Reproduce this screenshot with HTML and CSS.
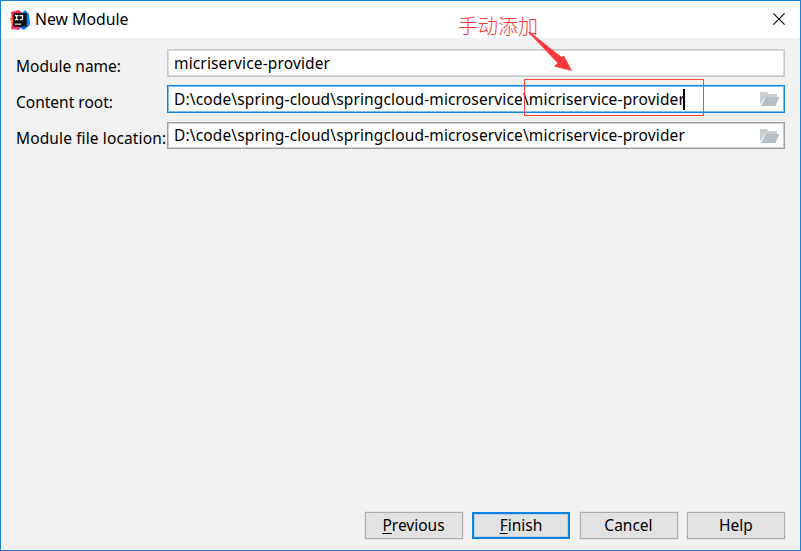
FILE: index.html
```html
<!DOCTYPE html>
<html lang="en">
<head>
<meta charset="utf-8">
<title>New Module</title>
<link rel="stylesheet" href="styles.css">
</head>
<body>
<div class="dialog">
  <header class="titlebar">
    <svg class="logo" width="20" height="20" viewBox="0 0 20 20">
      <path fill="#fc801d" d="M0 8l5-1v9l-3 1z"/>
      <path fill="#fe2857" d="M1 2l8-2 3 3-7 5-3 2z"/>
      <path fill="#f0357a" d="M2 13l3-2 6 6-2 3-8-1z"/>
      <path fill="#087cfa" d="M12 3l3-3 4 4 1 11-6 5-4-2z"/>
      <rect x="3.3" y="3" width="13.4" height="13.7" fill="#111"/>
      <path fill="none" stroke="#fff" stroke-width="1.2" d="M5 5.6h3.400M6.700 5.600v4M5 9.600h3.400M9.500 5.600h3v3q0 1-1.200 1H9.800"/>
      <path fill="#fff" d="M5 13.600h6v1.100H5z"/>
    </svg>
    <h1 class="title">New Module</h1>
    <svg class="close" width="12" height="12" viewBox="0 0 12 12"><path d="M.4.4l11.2 11.2M11.6.4L.4 11.6" fill="none" stroke="#000" stroke-width="1.1"/></svg>
  </header>
  <main class="form">
    <div class="row">
      <span class="label">Module name:</span>
      <div class="field light"><span class="value">micriservice-provider</span></div>
    </div>
    <div class="row">
      <span class="label">Content root:</span>
      <div class="field focus"><span class="value">D:\code\spring-cloud\springcloud-microservice\micriservice-provider</span><i class="caret"></i>
        <svg class="folder" width="20" height="14" viewBox="0 0 20 14"><path fill="#c9ced1" d="M0 0h7l1.500 2H17v3H5L0 13z"/><path fill="#b8bfc4" d="M5.500 5H19.500L15.500 14H1z"/></svg>
      </div>
    </div>
    <div class="row">
      <span class="label">Module file location:</span>
      <div class="field"><span class="value">D:\code\spring-cloud\springcloud-microservice\micriservice-provider</span>
        <svg class="folder" width="20" height="14" viewBox="0 0 20 14"><path fill="#c9ced1" d="M0 0h7l1.500 2H17v3H5L0 13z"/><path fill="#b8bfc4" d="M5.500 5H19.500L15.500 14H1z"/></svg>
      </div>
    </div>
  </main>
  <footer class="buttons">
    <button class="btn"><span><u>P</u>revious</span></button>
    <button class="btn primary"><span><u>F</u>inish</span></button>
    <button class="btn"><span>Cancel</span></button>
    <button class="btn"><span>Help</span></button>
  </footer>
  <div class="note">手动添加</div>
  <svg class="arrow" width="48" height="41" viewBox="0 0 48 41"><path fill="#fd3838" d="M0 0L2 0 33.500 25 36 23.500 44 39 26 34.500 29.500 31Z"/></svg>
  <div class="highlight"></div>
</div>
</body>
</html>
```
FILE: styles.css
```css
* { box-sizing: border-box; }
body { margin: 0; font-family: "Noto Sans", "Noto Sans CJK SC", sans-serif; font-size: 15.5px; color: #000; }
.dialog { position: relative; width: 801px; height: 551px; border: 1px solid #1a80d3; background: #f1f1f1; display: flex; flex-direction: column; overflow: hidden; }
.titlebar { height: 37px; background: #fff; display: flex; align-items: center; padding: 0 15px 2px 9px; flex: none; }
.logo { position: relative; top: 1px; }
.title { margin: 0 auto 0 5px; font-size: 15.8px; font-weight: 400; line-height: 20px; }
.form { padding: 11px 15px 0; display: flex; flex-direction: column; gap: 8px; }
.row { display: flex; height: 28px; }
.row:last-child { margin-top: 1px; height: 27px; }
.label { width: 151px; flex: none; line-height: 20px; padding-top: 7px; white-space: nowrap; }
.row:last-child .label { padding-top: 6px; letter-spacing: .12px; }
.field { flex: 1; min-width: 0; border: 1px solid #9f9fa1; box-shadow: inset 0 0 0 1px #d0d0d0; background: #fff; padding: 0 4px 0 6px; display: flex; align-items: center; }
.field.light { border-color: #c8c8c8; box-shadow: inset 0 0 0 1px #dcdcdc; }
.field.focus { border-color: #1684dc; box-shadow: inset 0 0 0 1px #7cbcf0; }
.value { line-height: 20px; padding-bottom: 1px; white-space: nowrap; letter-spacing: .14px; }
.row:last-child .value { padding-bottom: 1px; }
.caret { width: 2px; height: 21px; background: #000; margin-left: -2px; }
.folder { margin-left: auto; flex: none; }
.buttons { margin-top: auto; padding: 0 15px 11px; display: flex; justify-content: flex-end; gap: 9.5px; }
.btn { width: 98px; height: 27px; padding: 0 0 1px; border: 1px solid #adadad; background: #e2e2e2; box-shadow: 0 0 0 .5px #d8d8d8; font: inherit; line-height: 20px; color: #000; }
.btn.primary { border: 2px solid #0a82dc; box-shadow: inset 0 0 0 .5px #8dc1ea; }
.btn u { text-underline-offset: 2px; text-decoration-thickness: 1px; }
.note { position: absolute; left: 457px; top: 13px; font: 300 20px/24px "Noto Sans CJK SC", sans-serif; color: #fd3838; }
.arrow { position: absolute; left: 527px; top: 31px; }
.highlight { position: absolute; left: 523px; top: 78px; width: 180px; height: 37px; border: 1px solid #fb4545; }
```
